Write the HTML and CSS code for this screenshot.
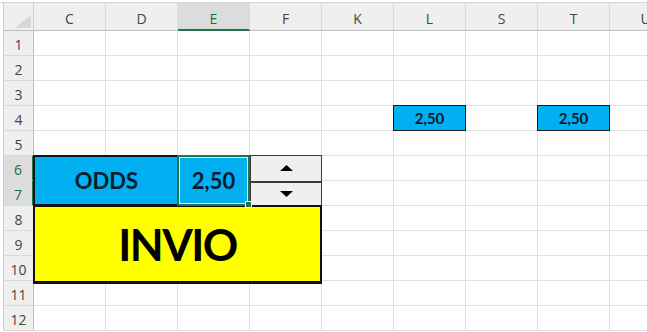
FILE: index.html
```html
<!DOCTYPE html>
<html lang="it">
<head>
    <meta charset="UTF-8">
    <meta name="viewport" content="width=device-width, initial-scale=1.0">
    <title>Foglio quote</title>
    <link rel="stylesheet" href="styles.css">
</head>
<body>
    <div class="top-edge"></div>
    <div class="sheet">
        <div class="gutter"></div>
        <div class="corner"><span class="corner-mark"></span></div>

        <div class="col-head">C</div>
        <div class="col-head">D</div>
        <div class="col-head sel">E</div>
        <div class="col-head">F</div>
        <div class="col-head">K</div>
        <div class="col-head">L</div>
        <div class="col-head">S</div>
        <div class="col-head">T</div>
        <div class="col-head">U</div>

        <div class="row-head">1</div>
        <div class="row-head">2</div>
        <div class="row-head">3</div>
        <div class="row-head">4</div>
        <div class="row-head">5</div>
        <div class="row-head sel">6</div>
        <div class="row-head sel">7</div>
        <div class="row-head">8</div>
        <div class="row-head">9</div>
        <div class="row-head">10</div>
        <div class="row-head">11</div>
        <div class="row-head">12</div>

        <div class="cells"></div>

        <div class="tag tag-l">2,50</div>
        <div class="tag tag-t">2,50</div>

        <div class="odds">ODDS</div>
        <div class="pick">2,50</div>
        <div class="spin">
            <button class="spin-btn" type="button">
                <svg width="13" height="6" viewBox="0 0 13 6"><polygon points="0,6 13,6 6.5,0" fill="#000"/></svg>
            </button>
            <button class="spin-btn" type="button">
                <svg width="13" height="6" viewBox="0 0 13 6"><polygon points="0,0 13,0 6.5,6" fill="#000"/></svg>
            </button>
        </div>

        <div class="send">INVIO</div>
    </div>
</body>
</html>
```

FILE: styles.css
```css
html, body {
    margin: 0;
    overflow: hidden;
}

body {
    background-color: #fff;
    font-family: "Lato", "Liberation Sans", sans-serif;
}

.top-edge {
    height: 3px;
    box-sizing: border-box;
    border-bottom: 1px solid #d6d6d6;
}

.sheet {
    display: grid;
    grid-template-columns: 4px 30px repeat(9, 72px);
    grid-template-rows: 28px repeat(12, 25px);
    width: 100%;
    overflow: hidden;
}

.sheet > div {
    box-sizing: border-box;
}

.gutter {
    grid-column: 1;
    grid-row: 1 / 14;
    border-right: 1px solid #cfcfcf;
}

.corner {
    grid-column: 2;
    grid-row: 1;
    background-color: #efefef;
    border-right: 1px solid #cfcfcf;
    border-bottom: 1px solid #bdbdbd;
    display: flex;
    justify-content: flex-end;
    align-items: flex-end;
    padding: 0 2px 2px 0;
}

.corner-mark {
    width: 16px;
    height: 13px;
    background-color: #d8d8d8;
    clip-path: polygon(100% 0, 100% 100%, 0 100%);
}

.col-head {
    grid-row: 1;
    background-color: #efefef;
    border-right: 1px solid #d9d9d9;
    border-bottom: 1px solid #bdbdbd;
    color: #444;
    font-family: "Open Sans", "Liberation Sans", sans-serif;
    font-size: 14px;
    display: flex;
    justify-content: center;
    align-items: flex-end;
    padding-bottom: 2px;
}

.col-head.sel {
    background-color: #dcdcdc;
    color: #1f6a42;
    border-bottom: 2px solid #217346;
    padding-bottom: 1px;
}

.row-head {
    grid-column: 2;
    background-color: #efefef;
    border-right: 1px solid #bdbdbd;
    border-bottom: 1px solid #d9d9d9;
    color: #444;
    font-family: "Open Sans", "Liberation Sans", sans-serif;
    font-size: 14px;
    display: flex;
    justify-content: center;
    align-items: center;
    padding-top: 3px;
}

.row-head.sel {
    background-color: #dcdcdc;
    color: #1f6a42;
    border-right: 2px solid #217346;
}

.cells {
    grid-column: 3 / 12;
    grid-row: 2 / 14;
    background-image:
        linear-gradient(to right, transparent 71px, #e1e1e1 71px),
        linear-gradient(to bottom, transparent 24px, #e1e1e1 24px);
    background-size: 72px 100%, 100% 25px;
}

.tag {
    grid-row: 5;
    margin: -1px 0 0 -1px;
    background-color: #00b0f0;
    border: 1px solid #1a1a1a;
    color: #0c1a2e;
    font-size: 15px;
    font-weight: 700;
    display: flex;
    justify-content: center;
    align-items: center;
}

.tag-l {
    grid-column: 8;
}

.tag-t {
    grid-column: 10;
}

.odds {
    grid-column: 3 / 5;
    grid-row: 7 / 9;
    margin: -1px 0 0 -1px;
    background-color: #00b0f0;
    border: 2px solid #141414;
    border-right: none;
    color: #0c1a2e;
    font-size: 22px;
    font-weight: 700;
    display: flex;
    justify-content: center;
    align-items: center;
}

.pick {
    grid-column: 5;
    grid-row: 7 / 9;
    margin: -1px 0 0 -1px;
    background-color: #00b0f0;
    border: 2px solid #217346;
    box-shadow: inset 0 0 0 1px #e8f4ee;
    color: #0c1a2e;
    font-size: 22px;
    font-weight: 700;
    display: flex;
    justify-content: center;
    align-items: center;
    position: relative;
}

.pick::after {
    content: "";
    position: absolute;
    right: -4px;
    bottom: -4px;
    width: 5px;
    height: 5px;
    background-color: #217346;
    border: 1px solid #fff;
}

.spin {
    grid-column: 6;
    grid-row: 7 / 9;
    margin-top: -1px;
    display: grid;
    grid-template-rows: 1fr 1fr;
    border: 1px solid #3a3a3a;
    background-color: #efefef;
}

.spin-btn {
    margin: 0;
    padding: 0;
    border: none;
    background-color: #efefef;
    display: flex;
    justify-content: center;
    align-items: center;
    cursor: pointer;
}

.spin-btn + .spin-btn {
    border-top: 2px solid #3a3a3a;
}

.send {
    grid-column: 3 / 7;
    grid-row: 9 / 12;
    margin: -1px 0 -3px -1px;
    background-color: #ffff00;
    border: 2px solid #111;
    border-bottom-width: 3px;
    color: #000;
    font-size: 44px;
    font-weight: 700;
    letter-spacing: -1.5px;
    display: flex;
    justify-content: center;
    align-items: center;
}
```
